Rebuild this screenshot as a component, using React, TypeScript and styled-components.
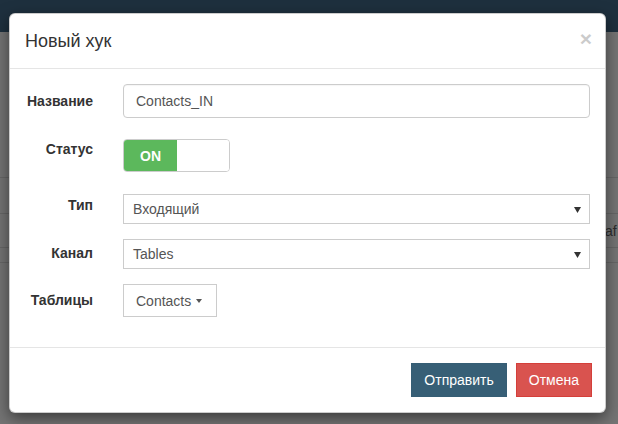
import React from "react";
import styled, { createGlobalStyle } from "styled-components";

const GlobalStyle = createGlobalStyle`
  html, body { margin: 0; padding: 0; }
  body {
    font-family: "Liberation Sans", Arial, Helvetica, sans-serif;
    font-size: 14px;
    line-height: 20px;
    color: #333;
  }
  * { box-sizing: border-box; }
`;

const Page = styled.div`
  position: relative;
  width: 618px;
  height: 424px;
  overflow: hidden;
  background: #747474;
  display: flex;
  flex-direction: column;
`;

const TopBar = styled.div`
  height: 32px;
  background: #1e303e;
  flex: none;
`;

const BgSpacer = styled.div<{ $h: number }>`
  height: ${(p) => p.$h}px;
  flex: none;
`;

const BgRow = styled.div<{ $h: number }>`
  height: ${(p) => p.$h}px;
  flex: none;
  border-top: 1px solid #666;
  display: flex;
  align-items: center;
  padding-left: 605px;
  color: #2c2c2c;
  font-size: 14px;
  white-space: nowrap;
  overflow: hidden;
`;

const Modal = styled.div`
  position: absolute;
  left: 9px;
  top: 13px;
  width: 597px;
  height: 400px;
  background: #fff;
  border: 1px solid rgba(0, 0, 0, 0.2);
  border-radius: 6px;
  box-shadow: 0 5px 15px rgba(0, 0, 0, 0.5);
  display: flex;
  flex-direction: column;
`;

const Header = styled.div`
  height: 55px;
  flex: none;
  padding: 0 15px;
  border-bottom: 1px solid #e5e5e5;
  display: flex;
  align-items: center;
  justify-content: space-between;
`;

const Title = styled.h4`
  margin: 0 0 1px 0;
  font-size: 18px;
  font-weight: normal;
  color: #333;
  line-height: 26px;
`;

const Close = styled.span`
  font-size: 21px;
  font-weight: bold;
  color: #000;
  opacity: 0.2;
  line-height: 1;
  margin: 0 -2px 6px 0;
`;

const Body = styled.div`
  flex: 1;
  padding: 15px;
  display: flex;
  flex-direction: column;
`;

const FormRow = styled.div<{ $mt: number }>`
  display: grid;
  grid-template-columns: 68px 1fr;
  column-gap: 30px;
  align-items: start;
  margin-top: ${(p) => p.$mt}px;
`;

const Label = styled.label<{ $pt: number }>`
  text-align: right;
  font-weight: bold;
  font-size: 14px;
  line-height: 20px;
  color: #333;
  padding-top: ${(p) => p.$pt}px;
  white-space: nowrap;
`;

const TextInput = styled.div`
  height: 34px;
  border: 1px solid #ccc;
  border-radius: 4px;
  padding: 6px 12px;
  color: #555;
  font-size: 14px;
  line-height: 20px;
  box-shadow: inset 0 1px 1px rgba(0, 0, 0, 0.04);
`;

const Switch = styled.div`
  width: 107px;
  height: 33px;
  border: 1px solid #ccc;
  border-radius: 4px;
  display: flex;
  overflow: hidden;
`;

const SwitchOn = styled.span`
  width: 53px;
  background: #5cb85c;
  color: #fff;
  font-size: 14px;
  font-weight: 600;
  display: flex;
  align-items: center;
  justify-content: center;
`;

const SwitchOff = styled.span`
  flex: 1;
  background: #fff;
`;

const Select = styled.div`
  height: 30px;
  border: 1px solid #ccc;
  background: #fff;
  padding: 0 9px;
  color: #555;
  font-size: 14px;
  display: flex;
  align-items: center;
  justify-content: space-between;
`;

const SelectArrow = styled.svg`
  width: 7px;
  height: 6px;
  margin-right: -1px;
  margin-top: 1px;
`;

const DropButton = styled.div`
  width: 94px;
  height: 33px;
  border: 1px solid #ccc;
  background: #fff;
  color: #555;
  font-size: 14px;
  display: flex;
  align-items: center;
  padding-left: 12px;
`;

const Caret = styled.span`
  display: inline-block;
  width: 0;
  height: 0;
  margin-left: 5px;
  margin-top: 1px;
  border-top: 4px solid #555;
  border-left: 3.5px solid transparent;
  border-right: 3.5px solid transparent;
`;

const Footer = styled.div`
  flex: none;
  border-top: 1px solid #e5e5e5;
  padding: 15px 13px 15px 15px;
  display: flex;
  justify-content: flex-end;
  gap: 9px;
`;

const Button = styled.button<{ $variant: "primary" | "danger" }>`
  height: 34px;
  padding: 0 12px;
  font-family: "Liberation Sans", Arial, sans-serif;
  font-size: 14px;
  color: #fff;
  border: 1px solid ${(p) => (p.$variant === "primary" ? "#365e75" : "#d43f3a")};
  background: ${(p) => (p.$variant === "primary" ? "#375f76" : "#d9534f")};
  border-radius: 0;
`;

export default function App() {
  return (
    <>
      <GlobalStyle />
      <Page>
        <TopBar />
        <BgSpacer $h={145} />
        <BgRow $h={36} />
        <BgRow $h={34}>af</BgRow>
        <BgRow $h={15} />
        <BgRow $h={1} />
        <Modal>
          <Header>
            <Title>Новый хук</Title>
            <Close>×</Close>
          </Header>
          <Body>
            <FormRow $mt={0}>
              <Label $pt={7}>Название</Label>
              <TextInput>Contacts_IN</TextInput>
            </FormRow>
            <FormRow $mt={21}>
              <Label $pt={0}>Статус</Label>
              <Switch>
                <SwitchOn>ON</SwitchOn>
                <SwitchOff />
              </Switch>
            </FormRow>
            <FormRow $mt={22}>
              <Label $pt={1}>Тип</Label>
              <Select>
                <span>Входящий</span>
                <SelectArrow viewBox="0 0 7 6">
                  <polygon points="0,0 7,0 3.5,6" fill="#333" />
                </SelectArrow>
              </Select>
            </FormRow>
            <FormRow $mt={15}>
              <Label $pt={4}>Канал</Label>
              <Select>
                <span>Tables</span>
                <SelectArrow viewBox="0 0 7 6">
                  <polygon points="0,0 7,0 3.5,6" fill="#333" />
                </SelectArrow>
              </Select>
            </FormRow>
            <FormRow $mt={15}>
              <Label $pt={6}>Таблицы</Label>
              <DropButton>
                Contacts
                <Caret />
              </DropButton>
            </FormRow>
          </Body>
          <Footer>
            <Button $variant="primary">Отправить</Button>
            <Button $variant="danger">Отмена</Button>
          </Footer>
        </Modal>
      </Page>
    </>
  );
}
